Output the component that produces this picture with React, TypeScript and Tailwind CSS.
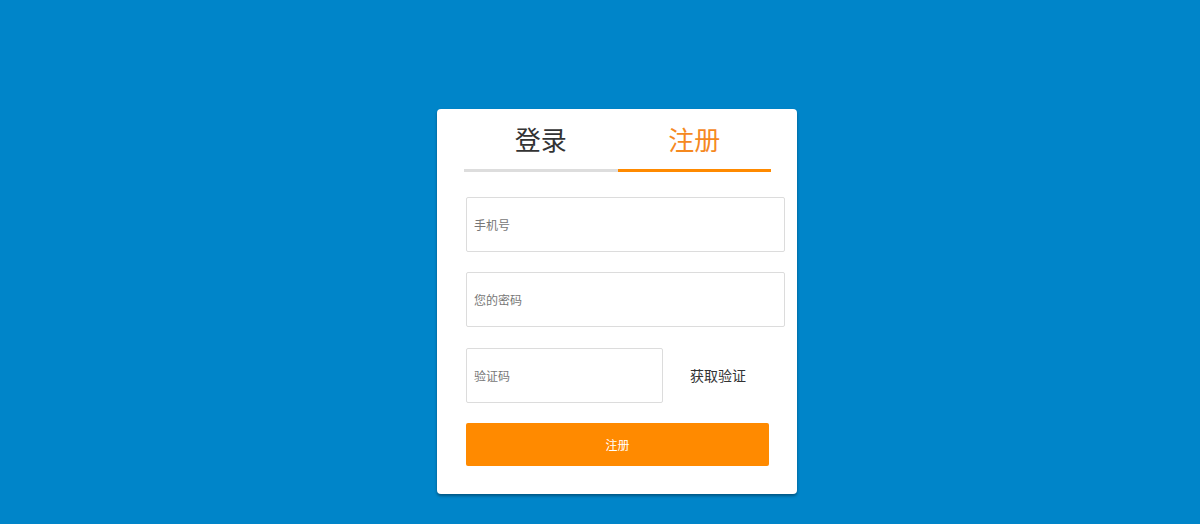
import { useState } from "react";

const font = { fontFamily: '"Noto Sans CJK SC", "Noto Sans", sans-serif' };

export default function App() {
  const [tab, setTab] = useState<"login" | "register">("register");

  return (
    <div className="min-h-[524px] w-full bg-[#0085c9] pl-[437px] pt-[109px]" style={font}>
      <div className="w-[360px] rounded-[4px] bg-white pb-[28px] pl-[27px] pr-[12px] shadow-[0_2px_3px_rgba(0,0,0,0.35)]">
        <div className="flex w-[307px]">
          <button
            type="button"
            onClick={() => setTab("login")}
            className={`flex-1 border-b-[3px] pb-[12px] pt-[12px] text-[26px] leading-[36px] ${
              tab === "login" ? "border-[#ff8a00] text-[#f5891f]" : "border-[#dddddd] text-[#333333]"
            }`}
          >
            登录
          </button>
          <button
            type="button"
            onClick={() => setTab("register")}
            className={`flex-1 border-b-[3px] pb-[12px] pt-[12px] text-[26px] leading-[36px] ${
              tab === "register" ? "border-[#ff8a00] text-[#f5891f]" : "border-[#dddddd] text-[#333333]"
            }`}
          >
            注册
          </button>
        </div>

        <div className="ml-[2px] mt-[25px] flex flex-col gap-[20px]">
          <input
            placeholder="手机号"
            className="h-[55px] w-[319px] rounded-[2px] border border-[#dcdcdc] px-[7px] text-[12px] text-[#333] outline-none placeholder:text-[#777]"
          />
          <input
            type="password"
            placeholder="您的密码"
            className="h-[55px] w-[319px] rounded-[2px] border border-[#dcdcdc] px-[7px] text-[12px] text-[#333] outline-none placeholder:text-[#777]"
          />
          <div className="flex items-center pt-px">
            <input
              placeholder="验证码"
              className="h-[55px] w-[197px] rounded-[2px] border border-[#dcdcdc] px-[7px] text-[12px] text-[#333] outline-none placeholder:text-[#777]"
            />
            <span className="ml-[27px] text-[14px] text-[#333333]">获取验证</span>
          </div>
          <button
            type="button"
            className="h-[43px] w-[303px] rounded-[2px] bg-[#ff8a00] text-[12px] text-white"
          >
            注册
          </button>
        </div>
      </div>
    </div>
  );
}
